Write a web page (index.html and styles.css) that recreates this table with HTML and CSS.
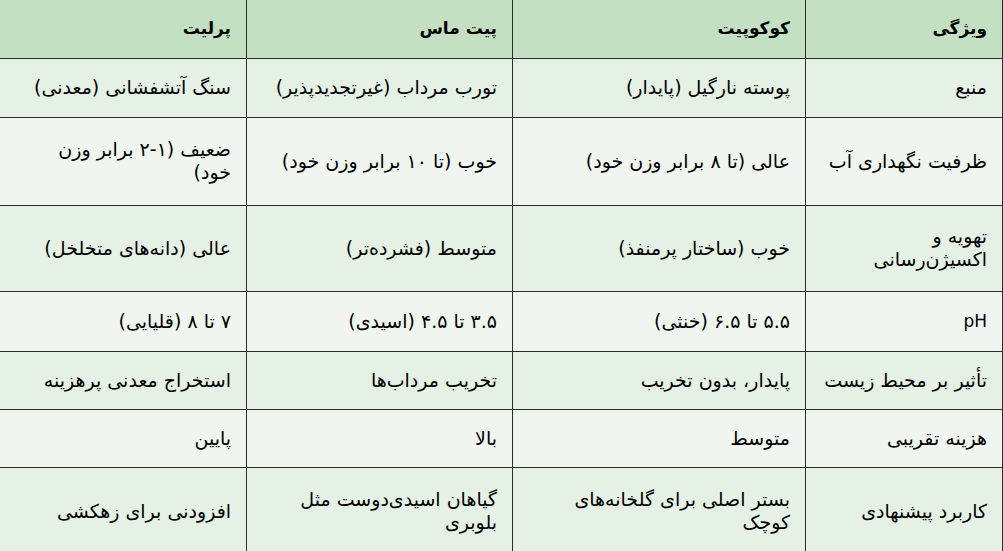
FILE: index.html
```html
<!DOCTYPE html>
<html lang="fa" dir="rtl">
<head>
<meta charset="utf-8">
<link rel="stylesheet" href="styles.css">
</head>
<body>
<table class="cmp">
  <colgroup>
    <col class="c1"><col class="c2"><col class="c3"><col class="c4">
  </colgroup>
  <thead>
    <tr class="r-head">
      <th>ویژگی</th><th>کوکوپیت</th><th>پیت ماس</th><th>پرلیت</th>
    </tr>
  </thead>
  <tbody>
    <tr class="r1 odd">
      <td>منبع</td><td>پوسته نارگیل (پایدار)</td><td>تورب مرداب (غیرتجدیدپذیر)</td><td>سنگ آتشفشانی (معدنی)</td>
    </tr>
    <tr class="r2 even">
      <td>ظرفیت نگهداری آب</td><td>عالی (تا ۸ برابر وزن خود)</td><td>خوب (تا ۱۰ برابر وزن خود)</td><td>ضعیف (۱-۲ برابر وزن<br>خود)</td>
    </tr>
    <tr class="r3 odd">
      <td>تهویه و<br>اکسیژن‌رسانی</td><td>خوب (ساختار پرمنفذ)</td><td>متوسط (فشرده‌تر)</td><td>عالی (دانه‌های متخلخل)</td>
    </tr>
    <tr class="r4 even">
      <td class="ltr">pH</td><td>۵.۵ تا ۶.۵ (خنثی)</td><td>۳.۵ تا ۴.۵ (اسیدی)</td><td>۷ تا ۸ (قلیایی)</td>
    </tr>
    <tr class="r5 odd">
      <td>تأثیر بر محیط زیست</td><td>پایدار، بدون تخریب</td><td>تخریب مرداب‌ها</td><td>استخراج معدنی پرهزینه</td>
    </tr>
    <tr class="r6 even">
      <td>هزینه تقریبی</td><td>متوسط</td><td>بالا</td><td>پایین</td>
    </tr>
    <tr class="r7 odd">
      <td>کاربرد پیشنهادی</td><td>بستر اصلی برای گلخانه‌های<br>کوچک</td><td>گیاهان اسیدی‌دوست مثل<br>بلوبری</td><td>افزودنی برای زهکشی</td>
    </tr>
  </tbody>
</table>
</body>
</html>
```
FILE: styles.css
```css
html, body {
  margin: 0;
  padding: 0;
  background: #ffffff;
}
body {
  font-family: "DejaVu Sans", "Noto Sans", sans-serif;
  font-size: 19px;
  color: #000;
  overflow: hidden;
}
.cmp {
  width: 1003px;
  border-collapse: collapse;
  table-layout: fixed;
}
.c1 { width: 197px; }
.c2 { width: 293px; }
.c3 { width: 266px; }
.c4 { width: 247px; }
.cmp th, .cmp td {
  border: 1px solid #2c2c2c;
  text-align: right;
  vertical-align: middle;
  padding: 0 15px 0 6px;
  line-height: 23px;
  white-space: nowrap;
}
.cmp tr > :last-child { border-left: none; }
.cmp thead th { border-top: none; }
.cmp th {
  font-weight: bold;
  background: #c3e0c3;
  font-size: 17px;
}
.r-head { height: 58px; }
.r1 { height: 59px; }
.r2 { height: 88px; }
.r3 { height: 86px; }
.r4 { height: 60px; }
.r5 { height: 58px; }
.r6 { height: 58px; }
.r7 { height: 88px; }
.odd td { background: #e6f1e5; }
.even td { background: #f0f6ef; }
.ltr { font-size: 17px; }
```
